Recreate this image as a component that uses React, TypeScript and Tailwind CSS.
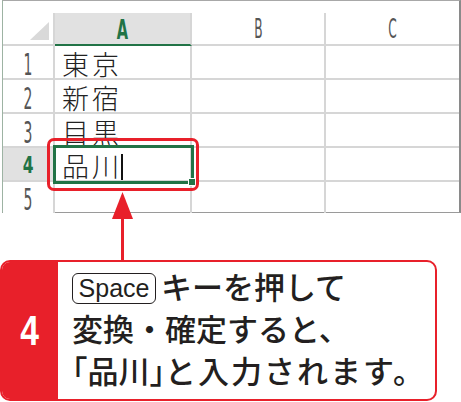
import React from 'react';

const GRID = 'border-[#d6d6d6]';
const NUM_FONT = "font-['DejaVu_Sans_Condensed','DejaVu_Sans',sans-serif]";
const JP_FONT = "font-['Noto_Sans_CJK_JP','Noto_Sans',sans-serif]";

const ROWS = [
  { n: '1', text: '東京' },
  { n: '2', text: '新宿' },
  { n: '3', text: '目黒' },
  { n: '4', text: '品川', active: true },
  { n: '5', text: '' },
];

function HeaderRow() {
  return (
    <div className="grid grid-cols-[52px_137px_134px_133px] h-[33px]">
      {/* corner */}
      <div className={`relative border-r-2 border-b-2 ${GRID} bg-white`}>
        <div className="absolute right-[4px] bottom-[4px] w-0 h-0 border-l-[19px] border-l-transparent border-b-[18px] border-b-[#d9d9d9]" />
      </div>
      <div className={`flex items-center justify-center bg-[#e1e1e1] border-r-2 ${GRID} border-b-2 border-b-[#217346]`}>
        <span className={`${NUM_FONT} font-bold text-[27px] leading-none text-[#217346] scale-x-[0.6] translate-y-[1px]`}>A</span>
      </div>
      <div className={`flex items-center justify-center bg-white border-r-2 border-b-2 ${GRID}`}>
        <span className={`${NUM_FONT} font-extralight text-[27px] leading-none text-[#555] scale-x-[0.5]`}>B</span>
      </div>
      <div className={`flex items-center justify-center bg-white border-b-2 ${GRID}`}>
        <span className={`${NUM_FONT} font-extralight text-[27px] leading-none text-[#555] scale-x-[0.5]`}>C</span>
      </div>
    </div>
  );
}

function SheetRow({ n, text, active, last }: { n: string; text: string; active?: boolean; last?: boolean }) {
  const h = last ? 'h-[30px]' : 'h-[34px] border-b-2';
  return (
    <div className={`grid grid-cols-[52px_137px_134px_133px] ${h} ${GRID}`}>
      <div className={`flex items-center justify-center border-r-2 ${GRID} ${active ? 'bg-[#e1e1e1]' : 'bg-white'}`}>
        {active ? (
          <span className={`${NUM_FONT} font-bold text-[23px] leading-none text-[#217346] scale-x-[0.75] translate-y-[1px]`}>{n}</span>
        ) : (
          <span className={`${NUM_FONT} font-extralight text-[31px] leading-none text-[#555] scale-x-[0.5] translate-y-[2px]`}>{n}</span>
        )}
      </div>
      <div className={`flex items-center pl-[7px] pt-[3px] border-r-2 ${GRID}`}>
        <span className={`${JP_FONT} font-light text-[27px] leading-none tracking-[3px] text-[#222]`}>{text}</span>
      </div>
      <div className={`border-r-2 ${GRID}`} />
      <div />
    </div>
  );
}

function Sheet() {
  return (
    <div className="ml-[2px] w-[459px] h-[213px] border-t border-b border-t-[#a8a8a8] border-b-[#9a9a9a] border-l border-l-[#9db3a3] border-r-2 border-r-[#8a8a8a] bg-white">
      <div className="h-[12px]" />
      <HeaderRow />
      {ROWS.map((r, i) => (
        <SheetRow key={r.n} {...r} last={i === ROWS.length - 1} />
      ))}
    </div>
  );
}

function SpaceKey() {
  return (
    <span className="inline-flex items-center justify-center align-middle w-[84px] h-[31px] mr-[5px] -mt-[4px] rounded-[6px] border-[1.5px] border-[#231f20] font-['Liberation_Sans',sans-serif] text-[25px] leading-none font-normal tracking-normal">
      Space
    </span>
  );
}

function Callout() {
  return (
    <div className="mt-[47px] flex w-[437px] h-[141px] rounded-[10px] border-[2.5px] border-[#e8202a] overflow-hidden bg-white">
      <div className="w-[56px] shrink-0 bg-[#e8202a] flex items-center justify-center">
        <span className="font-['Liberation_Sans',sans-serif] font-bold text-[42px] leading-none text-white scale-x-[0.8]">4</span>
      </div>
      <div className={`pl-[14px] pt-[3px] ${JP_FONT} font-medium text-[31px] leading-[42px] text-[#231f20] whitespace-nowrap`}>
        <div>
          <SpaceKey />
          キーを押して
        </div>
        <div>変換・確定すると、</div>
        <div>
          <span className="[font-feature-settings:'halt']">「</span>品川<span className="[font-feature-settings:'halt']">」</span>
          <span className="tracking-[2px]">と入力されます。</span>
        </div>
      </div>
    </div>
  );
}

export default function App() {
  return (
    <div className="relative w-[461px] h-[402px] bg-white overflow-hidden">
      <Sheet />
      <Callout />

      {/* selected cell A4 */}
      <div className="absolute left-[53px] top-[145px] w-[141px] h-[39px] border-[3px] border-[#217346]">
        <div className="absolute right-[-5px] bottom-[-5px] w-[8px] h-[8px] bg-[#217346] border border-white" />
      </div>
      {/* text cursor */}
      <div className="absolute left-[121px] top-[154px] w-[1.5px] h-[26px] bg-[#111]" />

      {/* red highlight */}
      <div className="absolute left-[47px] top-[138px] w-[152px] h-[53px] rounded-[7px] border-[3px] border-[#e8202a]" />

      {/* arrow */}
      <svg className="absolute left-[110px] top-[190px]" width="26" height="72" viewBox="0 0 26 72">
        <polygon points="12.5,2 23,29 2,29" fill="#e8202a" />
        <rect x="11" y="28" width="3" height="44" fill="#e8202a" />
      </svg>
    </div>
  );
}
